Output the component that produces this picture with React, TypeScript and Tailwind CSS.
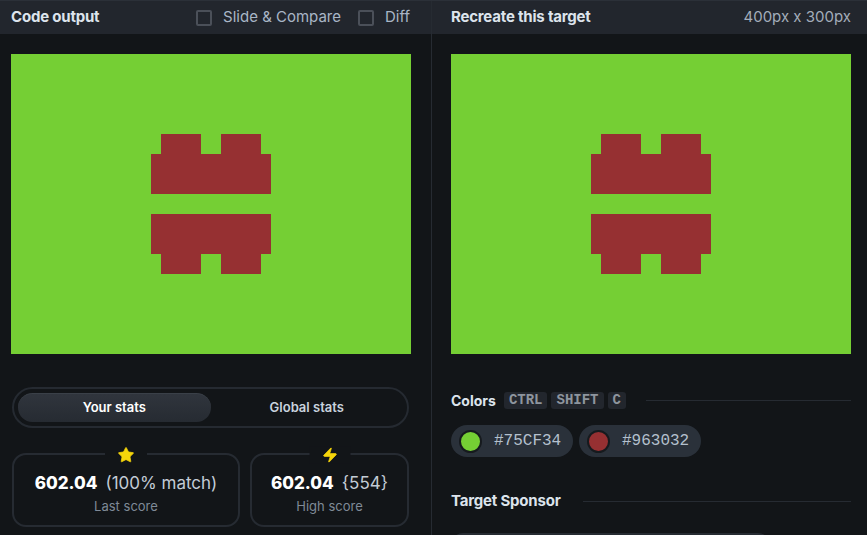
import React, { useState } from 'react';
import { Star, Zap } from 'lucide-react';

const colors = ['#75CF34', '#963032'];

function Target() {
  // 400x300 battle target, drawn in flow with fixed blocks
  return (
    <div className="relative w-[400px] h-[300px] bg-[#75cf34] shrink-0">
      <div className="absolute left-[150px] top-[80px] w-[40px] h-[20px] bg-[#963032]" />
      <div className="absolute left-[210px] top-[80px] w-[40px] h-[20px] bg-[#963032]" />
      <div className="absolute left-[140px] top-[100px] w-[120px] h-[40px] bg-[#963032]" />
      <div className="absolute left-[140px] top-[160px] w-[120px] h-[40px] bg-[#963032]" />
      <div className="absolute left-[150px] top-[200px] w-[40px] h-[20px] bg-[#963032]" />
      <div className="absolute left-[210px] top-[200px] w-[40px] h-[20px] bg-[#963032]" />
    </div>
  );
}

function Checkbox({ label }: { label: string }) {
  return (
    <label className="flex items-center gap-[11px] cursor-pointer">
      <span className="w-[16px] h-[16px] rounded-[2px] border-2 border-[#4b5059]" />
      <span className="text-[15px] text-[#a9b6c6]">{label}</span>
    </label>
  );
}

function StatCard({ icon, value, extra, label, className }: { icon: React.ReactNode; value: string; extra: string; label: string; className: string }) {
  return (
    <div className={`relative h-[74px] rounded-[14px] border-2 border-[#262b32] flex flex-col items-center justify-center pt-[7px] ${className}`}>
      <div className="absolute top-0 left-1/2 -translate-x-1/2 -translate-y-1/2 px-[12px] bg-[#121518]">{icon}</div>
      <div className="flex items-baseline gap-[8px] leading-none">
        <span className="text-[17px] font-extrabold text-white">{value}</span>
        <span className="text-[17px] text-[#c3ccd6]">{extra}</span>
      </div>
      <div className="text-[13px] text-[#7f8a97] mt-[8px] leading-none">{label}</div>
    </div>
  );
}

export default function App() {
  const [tab, setTab] = useState('your');
  const [showDiff] = useState(false);

  return (
    <div className="w-[867px] h-[535px] overflow-hidden bg-[#121518] border-t border-[#2b3038] flex font-['Inter',sans-serif]">
      {/* left: code output */}
      <div className="w-[432px] shrink-0 border-r border-[#262b32] flex flex-col">
        <div className="h-[33px] shrink-0 bg-[#22262d] flex items-center pl-[11px] pr-[21px]">
          <h2 className="text-[15px] font-bold text-[#dde4ec] tracking-[-0.2px]">Code output</h2>
          <div className="ml-auto flex items-center gap-[17px]">
            <Checkbox label="Slide & Compare" />
            <Checkbox label="Diff" />
          </div>
        </div>
        <div className="px-[11px] pt-[20px] shrink-0">
          {!showDiff && <Target />}
        </div>
        <div className="pl-[12px] pr-[22px] pt-[33px] shrink-0">
          <div className="h-[41px] rounded-full border-2 border-[#252a31] p-[4px] flex">
            <button
              onClick={() => setTab('your')}
              className={`flex-1 rounded-full text-[13px] font-semibold ${tab === 'your' ? 'bg-gradient-to-b from-[#30353d] to-[#262b32] border-t border-[#3a4048] text-white' : 'text-[#c9d3de]'}`}
            >
              Your stats
            </button>
            <button
              onClick={() => setTab('global')}
              className={`flex-1 rounded-full text-[13px] font-semibold ${tab === 'global' ? 'bg-gradient-to-b from-[#30353d] to-[#262b32] border-t border-[#3a4048] text-white' : 'text-[#c9d3de]'}`}
            >
              Global stats
            </button>
          </div>
          <div className="flex gap-[10px] mt-[25px]">
            <StatCard
              className="w-[228px]"
              icon={<Star size={18} fill="#f6d50b" stroke="#f6d50b" strokeWidth={1} />}
              value="602.04"
              extra="(100% match)"
              label="Last score"
            />
            <StatCard
              className="flex-1"
              icon={<Zap size={17} fill="#f6d50b" stroke="#f6d50b" strokeWidth={1} />}
              value="602.04"
              extra="{554}"
              label="High score"
            />
          </div>
        </div>
      </div>

      {/* right: target */}
      <div className="flex-1 flex flex-col">
        <div className="h-[33px] shrink-0 bg-[#22262d] flex items-center pl-[19px] pr-[16px]">
          <h2 className="text-[15px] font-bold text-[#dde4ec] tracking-[-0.2px]">Recreate this target</h2>
          <span className="ml-auto text-[15px] text-[#a3adba]">400px x 300px</span>
        </div>
        <div className="pl-[19px] pr-[16px] pt-[20px] shrink-0">
          <Target />
          <div className="flex items-center mt-[36px]">
            <h3 className="text-[14px] font-bold text-[#dde4ec] mr-[8px]">Colors</h3>
            <div className="flex gap-[4px] font-['Liberation_Mono',monospace] text-[14px] font-bold text-[#8e959e]">
              <kbd className="bg-[#22262d] rounded-[3px] px-[5px] leading-[17px]">CTRL</kbd>
              <kbd className="bg-[#22262d] rounded-[3px] px-[5px] leading-[17px]">SHIFT</kbd>
              <kbd className="bg-[#22262d] rounded-[3px] px-[5px] leading-[17px]">C</kbd>
            </div>
            <div className="flex-1 h-px bg-[#262b32] ml-[20px]" />
          </div>
          <div className="flex gap-[6px] mt-[14px]">
            {colors.map((c) => (
              <div key={c} className="h-[32px] w-[122px] rounded-full bg-[#2a313a] flex items-center pl-[8px] gap-[12px]">
                <span className="w-[23px] h-[23px] rounded-full border-2 border-[#161a1e]" style={{ backgroundColor: c }} />
                <span className="font-['Liberation_Mono',monospace] text-[16px] text-[#b4c0cd]">{c}</span>
              </div>
            ))}
          </div>
          <div className="flex items-center mt-[33px]">
            <h3 className="text-[15px] font-bold text-[#dde4ec] tracking-[-0.2px]">Target Sponsor</h3>
            <div className="flex-1 h-px bg-[#262b32] ml-[22px]" />
          </div>
          <div className="mt-[20px] w-[319px] h-[60px] rounded-[12px] border-2 border-[#262b32]" />
        </div>
      </div>
    </div>
  );
}
